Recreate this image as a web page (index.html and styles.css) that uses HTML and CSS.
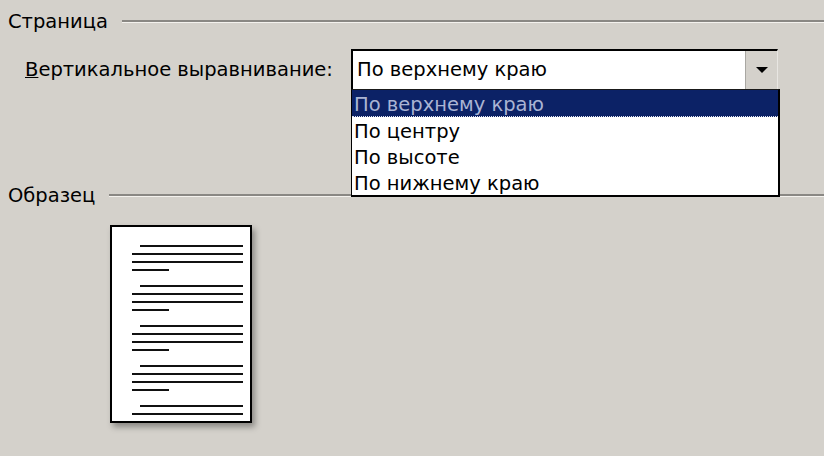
FILE: index.html
```html
<!DOCTYPE html>
<html lang="ru">
<head>
    <meta charset="UTF-8">
    <title>Параметры страницы</title>
    <link rel="stylesheet" href="styles.css">
</head>
<body>
    <div class="dialog">
        <div class="group-title">
            <span>Страница</span>
            <div class="etched"></div>
        </div>

        <div class="field-row">
            <label class="field-label"><u>В</u>ертикальное выравнивание:</label>
            <div class="combo">
                <div class="combo-value">По верхнему краю</div>
                <div class="combo-button"><span class="arrow"></span></div>
                <ul class="combo-list">
                    <li class="selected"><span>По верхнему краю</span></li>
                    <li><span>По центру</span></li>
                    <li><span>По высоте</span></li>
                    <li><span>По нижнему краю</span></li>
                </ul>
            </div>
        </div>

        <div class="group-title sample-title">
            <span>Образец</span>
            <div class="etched"></div>
        </div>

        <div class="preview">
            <div class="sheet">
                <div class="para">
                    <div class="line first"></div>
                    <div class="line"></div>
                    <div class="line"></div>
                    <div class="line short"></div>
                </div>
                <div class="para">
                    <div class="line first"></div>
                    <div class="line"></div>
                    <div class="line"></div>
                    <div class="line short"></div>
                </div>
                <div class="para">
                    <div class="line first"></div>
                    <div class="line"></div>
                    <div class="line"></div>
                    <div class="line short"></div>
                </div>
                <div class="para">
                    <div class="line first"></div>
                    <div class="line"></div>
                    <div class="line"></div>
                    <div class="line short"></div>
                </div>
                <div class="para">
                    <div class="line first"></div>
                    <div class="line"></div>
                </div>
            </div>
        </div>
    </div>
</body>
</html>
```

FILE: styles.css
```css
body {
    margin: 0;
    background-color: #d4d1cb;
    font-family: 'DejaVu Sans', sans-serif;
    font-size: 19.5px;
    color: #000;
    height: 456px;
    overflow: hidden;
}
.dialog {
    padding-top: 10px;
}
.group-title {
    display: flex;
    align-items: center;
    height: 24px;
    line-height: 24px;
}
.group-title span {
    padding-left: 8px;
    padding-right: 14px;
}
.etched {
    flex: 1;
    border-top: 2px solid #8a8884;
    border-bottom: 1px solid #f4f2ee;
    margin-top: -2px;
}
.field-row {
    display: flex;
    align-items: center;
    margin-top: 15px;
}
.field-label {
    width: 326px;
    padding-left: 25px;
}
.combo {
    position: relative;
    display: flex;
    width: 424px;
    height: 38px;
    background-color: #fff;
    border-top: 2px solid #000;
    border-left: 2px solid #000;
    border-right: 1px solid #e8e6e2;
}
.combo-value {
    flex: 1;
    padding-left: 4px;
    line-height: 38px;
}
.combo-button {
    width: 31px;
    background-color: #d4d1cb;
    border-left: 1px solid #a9a7a2;
    display: flex;
    align-items: center;
    justify-content: center;
}
.arrow {
    width: 0;
    height: 0;
    border-left: 6px solid transparent;
    border-right: 6px solid transparent;
    border-top: 6px solid #000;
}
.combo-list {
    position: absolute;
    top: 38px;
    left: -2px;
    width: 426px;
    margin: 0;
    padding: 0;
    list-style: none;
    background-color: #fff;
    border: 1px solid #000;
    border-top: 1px solid #1a1a1a;
    border-right: 2px solid #000;
    border-bottom: 2px solid #000;
}
.combo-list li {
    height: 23px;
    padding-top: 3px;
    line-height: 23px;
    padding-left: 2px;
}
.combo-list li.selected {
    height: 27px;
    background-color: #0c2266;
    color: #aab4d4;
    border-bottom: 1px dotted #dfe3f0;
    box-sizing: border-box;
}
.sample-title {
    margin-top: 95px;
}
.preview {
    padding-left: 110px;
    padding-top: 17px;
}
.sheet {
    width: 138px;
    height: 176px;
    background-color: #fff;
    border: 2px solid #000;
    box-shadow: 3px 4px 6px rgba(0, 0, 0, 0.35);
    padding-top: 18px;
    display: flex;
    flex-direction: column;
    gap: 14px;
    overflow: hidden;
}
.para {
    display: flex;
    flex-direction: column;
    gap: 6px;
}
.line {
    height: 2px;
    margin-left: 20px;
    margin-right: 7px;
    background-color: #111;
}
.line.first {
    margin-left: 28px;
}
.line.short {
    width: 37px;
}
```
